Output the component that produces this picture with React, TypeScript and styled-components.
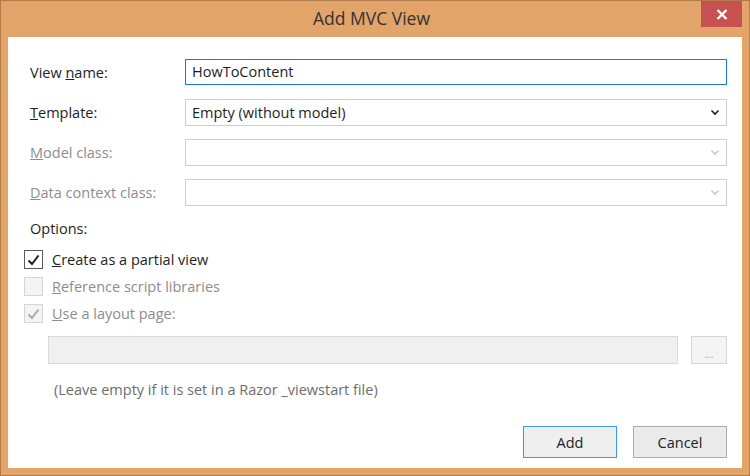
import React from "react";
import styled, { createGlobalStyle } from "styled-components";

const GlobalStyle = createGlobalStyle`
  html, body {
    margin: 0;
    padding: 0;
    background: #e3a469;
  }
  * {
    box-sizing: border-box;
  }
`;

const Window = styled.div`
  width: 750px;
  height: 476px;
  background: #e3a469;
  border: 1px solid #b07a4a;
  display: flex;
  flex-direction: column;
  font-family: "Open Sans", "Noto Sans", sans-serif;
  color: #1e1e1e;
`;

const TitleBar = styled.div`
  height: 36px;
  display: grid;
  grid-template-columns: 1fr auto 1fr;
  align-items: start;
  margin-right: 7px;
`;

const Title = styled.div`
  grid-column: 2;
  font-size: 17.5px;
  line-height: 34px;
  color: #333;
`;

const CloseButton = styled.div`
  grid-column: 3;
  justify-self: end;
  width: 41px;
  height: 26px;
  background: #c75050;
  display: flex;
  align-items: center;
  justify-content: center;
`;

const Client = styled.div`
  flex: 1;
  margin: 0 7px 7px 7px;
  background: #fff;
  padding: 22px 15px 0 22px;
  display: flex;
  flex-direction: column;
`;

const FieldGrid = styled.div`
  display: grid;
  grid-template-columns: 155px 1fr;
  grid-auto-rows: 27px;
  row-gap: 13px;
  align-items: center;
`;

const Label = styled.div<{ $disabled?: boolean }>`
  font-size: 14.5px;
  color: ${(p) => (p.$disabled ? "#8d8d8d" : "#1e1e1e")};
  align-self: center;
  padding-bottom: 1px;
`;

const TextInput = styled.div`
  height: 26px;
  border: 1px solid #1979ca;
  padding: 0 6px;
  font-size: 14.5px;
  line-height: 24px;
  color: #1e1e1e;
  align-self: start;
`;

const Select = styled.div<{ $disabled?: boolean }>`
  height: 27px;
  border: 1px solid #cccedb;
  padding: 0 6px;
  font-size: 14.5px;
  display: flex;
  align-items: center;
  justify-content: space-between;
  color: ${(p) => (p.$disabled ? "#a2a4a5" : "#1e1e1e")};
`;

const Options = styled.div`
  margin-top: 13px;
  font-size: 14.5px;
  line-height: 20px;
`;

const CheckList = styled.div`
  margin: 11px 0 0 -6px;
  display: flex;
  flex-direction: column;
  gap: 8px;
`;

const CheckRow = styled.div<{ $disabled?: boolean }>`
  display: flex;
  align-items: center;
  gap: 9px;
  height: 19px;
  font-size: 14.5px;
  color: ${(p) => (p.$disabled ? "#8d8d8d" : "#1e1e1e")};
`;

const Box = styled.div<{ $disabled?: boolean }>`
  width: 19px;
  height: 19px;
  border: 1px solid ${(p) => (p.$disabled ? "#d5d5d5" : "#5a5a5a")};
  background: ${(p) => (p.$disabled ? "#f4f4f4" : "#fff")};
  display: flex;
  align-items: center;
  justify-content: center;
`;

const LayoutRow = styled.div`
  margin: 13px 0 0 18px;
  display: flex;
  gap: 13px;
  height: 28px;
`;

const DisabledBox = styled.div`
  flex: 1;
  background: #f0f0f0;
  border: 1px solid #d9d9d9;
`;

const BrowseButton = styled.div`
  width: 36px;
  background: #f4f4f4;
  border: 1px solid #d4d5e0;
  display: flex;
  align-items: center;
  justify-content: center;
  padding-top: 6px;
  font-size: 11px;
  color: #a7a0b8;
`;

const Hint = styled.div`
  margin: 16px 0 0 24px;
  font-size: 14.5px;
  color: #6d6d6d;
`;

const Footer = styled.div`
  margin-top: auto;
  margin-bottom: 10px;
  display: flex;
  justify-content: flex-end;
  gap: 16px;
`;

const Button = styled.div<{ $default?: boolean }>`
  width: 94px;
  height: 32px;
  display: flex;
  align-items: center;
  justify-content: center;
  font-size: 14.5px;
  color: #1e1e1e;
  background: ${(p) => (p.$default ? "#efefef" : "#eaeaea")};
  border: 1px solid ${(p) => (p.$default ? "#3c98e8" : "#acacac")};
`;

const Chevron = ({ color }: { color: string }) => (
  <svg width="10" height="7" viewBox="0 0 10 7">
    <path d="M1.5 1.5 L5 5 L8.5 1.5" fill="none" stroke={color} strokeWidth="1.6" />
  </svg>
);

const Check = ({ color }: { color: string }) => (
  <svg width="13" height="12" viewBox="0 0 13 12">
    <path d="M1.5 6.5 L5 10 L11.5 1.5" fill="none" stroke={color} strokeWidth="2" />
  </svg>
);

export default function App() {
  return (
    <>
      <GlobalStyle />
      <Window>
        <TitleBar>
          <Title>Add MVC View</Title>
          <CloseButton>
            <svg width="12" height="11" viewBox="0 0 12 11">
              <path d="M1.5 1 L10.5 10 M10.5 1 L1.5 10" stroke="#fff" strokeWidth="2.4" />
            </svg>
          </CloseButton>
        </TitleBar>
        <Client>
          <FieldGrid>
            <Label>
              View <u>n</u>ame:
            </Label>
            <TextInput>HowToContent</TextInput>
            <Label>
              <u>T</u>emplate:
            </Label>
            <Select>
              Empty (without model)
              <Chevron color="#1e1e1e" />
            </Select>
            <Label $disabled>
              <u>M</u>odel class:
            </Label>
            <Select $disabled>
              <span />
              <Chevron color="#c8c8d0" />
            </Select>
            <Label $disabled>
              <u>D</u>ata context class:
            </Label>
            <Select $disabled>
              <span />
              <Chevron color="#c8c8d0" />
            </Select>
          </FieldGrid>
          <Options>Options:</Options>
          <CheckList>
            <CheckRow>
              <Box>
                <Check color="#1e1e1e" />
              </Box>
              <span>
                <u>C</u>reate as a partial view
              </span>
            </CheckRow>
            <CheckRow $disabled>
              <Box $disabled />
              <span>
                <u>R</u>eference script libraries
              </span>
            </CheckRow>
            <CheckRow $disabled>
              <Box $disabled>
                <Check color="#a8a8a8" />
              </Box>
              <span>
                <u>U</u>se a layout page:
              </span>
            </CheckRow>
          </CheckList>
          <LayoutRow>
            <DisabledBox />
            <BrowseButton>...</BrowseButton>
          </LayoutRow>
          <Hint>(Leave empty if it is set in a Razor _viewstart file)</Hint>
          <Footer>
            <Button $default>Add</Button>
            <Button>Cancel</Button>
          </Footer>
        </Client>
      </Window>
    </>
  );
}
